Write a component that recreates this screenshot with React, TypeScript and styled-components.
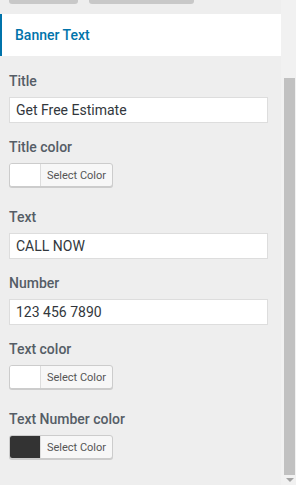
import styled, { createGlobalStyle } from 'styled-components';

const GlobalStyle = createGlobalStyle`
  html, body {
    margin: 0;
    padding: 0;
    background: #eeeeee;
  }
  body {
    font-family: Roboto, "Liberation Sans", sans-serif;
    overflow: hidden;
  }
`;

interface IField {
  kind: 'text' | 'color';
  label: string;
  value?: string;
  swatch?: string;
}

const fields: IField[] = [
  { kind: 'text', label: 'Title', value: 'Get Free Estimate' },
  { kind: 'color', label: 'Title color', swatch: '#ffffff' },
  { kind: 'text', label: 'Text', value: 'CALL NOW' },
  { kind: 'text', label: 'Number', value: '123 456 7890' },
  { kind: 'color', label: 'Text color', swatch: '#ffffff' },
  { kind: 'color', label: 'Text Number color', swatch: '#333333' },
];

export default function App() {
  return (
    <>
      <GlobalStyle />
      <Frame>
        <Panel>
          <TopButtons>
            <GhostButton $width={69} />
            <GhostButton $width={105} />
          </TopButtons>
          <SectionHeader>Banner Text</SectionHeader>
          <Controls>
            {fields.map((f) => (
              <Control key={f.label} $kind={f.kind}>
                <Label>{f.label}</Label>
                {f.kind === 'text' ? (
                  <TextInput type="text" defaultValue={f.value} />
                ) : (
                  <ColorButton type="button">
                    <Swatch $color={f.swatch || '#fff'} />
                    <span>Select Color</span>
                  </ColorButton>
                )}
              </Control>
            ))}
          </Controls>
        </Panel>
        <ScrollTrack>
          <Thumb />
          <Arrow />
        </ScrollTrack>
      </Frame>
    </>
  );
}

//****************************************************//

const Frame = styled.div`
  display: flex;
  width: 296px;
  height: 485px;
  background: #eeeeee;
`;

const Panel = styled.div`
  width: 281px;
  display: flex;
  flex-direction: column;
`;

const TopButtons = styled.div`
  display: flex;
  gap: 11px;
  padding-left: 9px;
  height: 4px;
  margin-bottom: 10px;
`;

const GhostButton = styled.div<{ $width: number }>`
  width: ${(p) => p.$width}px;
  height: 4px;
  background: #c8c8c8;
  border-radius: 0 0 3px 3px;
`;

const SectionHeader = styled.h3`
  margin: 0;
  height: 42px;
  box-sizing: border-box;
  background: #ffffff;
  border-left: 2px solid #0073aa;
  padding: 0 0 0 13px;
  display: flex;
  align-items: center;
  font-size: 14px;
  font-weight: 500;
  color: #0073aa;
`;

const Controls = styled.div`
  padding: 15px 13px 0 9px;
  display: flex;
  flex-direction: column;
`;

const Control = styled.div<{ $kind: 'text' | 'color' }>`
  display: flex;
  flex-direction: column;
  align-items: flex-start;
  margin-bottom: ${(p) => (p.$kind === 'color' ? 20 : 14)}px;
`;

const Label = styled.span`
  font-size: 14px;
  line-height: 20px;
  font-weight: 500;
  color: #555d66;
  margin-bottom: 6px;
`;

const TextInput = styled.input`
  width: 100%;
  height: 26px;
  box-sizing: border-box;
  border: 1px solid #dddddd;
  background: #ffffff;
  padding: 0 6px;
  font-family: Roboto, "Liberation Sans", sans-serif;
  font-size: 14px;
  color: #32373c;
  outline: none;
`;

const ColorButton = styled.button`
  display: flex;
  align-items: stretch;
  height: 24px;
  width: 104px;
  padding: 0;
  box-sizing: border-box;
  border: 1px solid #cccccc;
  border-radius: 3px;
  background: #f7f7f7;
  box-shadow: 0 1px 0 #cccccc;
  overflow: hidden;
  cursor: pointer;

  span {
    flex: 1;
    display: flex;
    align-items: center;
    justify-content: center;
    font-family: Roboto, "Liberation Sans", sans-serif;
    font-size: 11px;
    color: #555555;
    border-left: 1px solid #dddddd;
  }
`;

const Swatch = styled.div<{ $color: string }>`
  width: 30px;
  background: ${(p) => p.$color};
`;

const ScrollTrack = styled.div`
  flex: 1;
  background: #f1f1f1;
  display: flex;
  flex-direction: column;
  align-items: center;
  padding-top: 78px;
  box-sizing: border-box;
`;

const Thumb = styled.div`
  width: 11px;
  margin-left: 2px;
  height: 397px;
  background: #c1c1c1;
`;

const Arrow = styled.div`
  margin-top: 3px;
  margin-left: 2px;
  width: 0;
  height: 0;
  border-left: 4px solid transparent;
  border-right: 4px solid transparent;
  border-top: 4px solid #a3a3a3;
`;
